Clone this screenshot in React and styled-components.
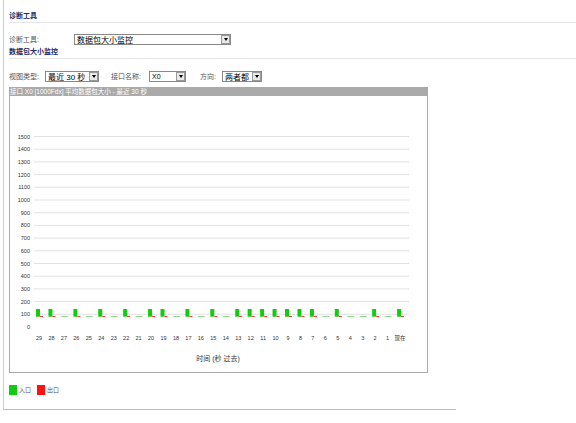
import React from 'react';
import styled, { createGlobalStyle } from 'styled-components';

const Global = createGlobalStyle`
  body { margin: 0; background: #fff; font-family: "Liberation Sans", "Noto Sans CJK SC", sans-serif; font-size: 7px; color: #333; }
`;

const Page = styled.div`
  width: 453px;
  height: 410px;
  margin-left: 3px;
  border-left: 1px solid #ccc;
  border-bottom: 1px solid #bbb;
  padding-left: 5px;
  box-sizing: border-box;
`;

const Section = styled.div`
  font-weight: bold;
  color: #1a2a6a;
  font-size: 7px;
  line-height: 8px;
  padding: ${p => p.$top}px 0 2px 0;
  border-bottom: 1px solid #e4e4e4;
  margin-right: -120px;
`;

const Row = styled.div`
  display: flex;
  align-items: center;
  height: 12px;
  margin-top: ${p => p.$top}px;
  color: #555;
  white-space: nowrap;
`;

const Label = styled.span`
  width: ${p => p.$w}px;
  margin-left: ${p => p.$ml || 0}px;
`;

const Select = styled.div`
  width: ${p => p.$w}px;
  height: 11px;
  border: 1px solid #888;
  display: flex;
  align-items: center;
  justify-content: space-between;
  font-size: ${p => p.$fs || 8}px;
  color: #000;
  padding-left: 2px;
  box-sizing: border-box;
  background: #fff;
  white-space: nowrap;
`;

const Arrow = styled.span`
  width: 9px;
  height: 9px;
  border: 1px solid #999;
  background: #e8e8e8;
  box-sizing: border-box;
  flex-shrink: 0;
  display: flex;
  align-items: center;
  justify-content: center;
  &::after { content: ''; border-left: 2px solid transparent; border-right: 2px solid transparent; border-top: 3px solid #000; }
`;

const Panel = styled.div`
  width: 419px;
  margin-top: 5px;
  border: 1px solid #aaa;
  border-top: none;
  box-sizing: border-box;
`;

const PanelTitle = styled.div`
  background: #aaa;
  color: #fff;
  height: 9px;
  line-height: 9px;
  font-size: 6.5px;
  padding-left: 1px;
  margin: 0 -1px;
  white-space: nowrap;
`;

const Legend = styled.div`
  display: flex;
  align-items: center;
  gap: 6px;
  margin-top: 12px;
  font-size: 6px;
  color: #555;
`;

const Swatch = styled.span`
  width: 8px;
  height: 10px;
  background: ${p => p.$c};
  display: inline-block;
  vertical-align: middle;
  margin-right: 2px;
`;

const green = [1,1,0,1,0,1,0,1,0,1,1,0,1,0,1,0,1,1,1,1,1,1,1,0,1,0,0,1,0,1];
const labels = [...Array(29)].map((_, i) => String(29 - i)).concat('现在');

const Chart = () => {
  const y0 = 231, step = 12.7, x0 = 26, colW = 12.45;
  return (
    <svg width="417" height="276" style={{ display: 'block' }}>
      {[...Array(16)].map((_, i) => (
        <g key={i}>
          <text x="20" y={y0 - i * step + 2} fontSize="5.5" textAnchor="end" fill="#333">{i * 100}</text>
          {i > 0 && <line x1="24" x2="399" y1={y0 - i * step} y2={y0 - i * step} stroke="#e2e2e2" strokeWidth="1" />}
        </g>
      ))}
      {labels.map((l, i) => {
        const x = x0 + i * colW;
        return (
          <g key={i}>
            {green[i] ? <rect x={x} y={y0 - 18} width="4" height="7.7" fill="#11cc11" /> : null}
            <rect x={x + (green[i] ? 4 : 0)} y={y0 - 11} width={green[i] ? 3 : 7} height="1" fill={green[i] ? '#ff3333' : '#8fd98f'} />
            <text x={x + 3} y={y0 + 13} fontSize="5.5" textAnchor="middle" fill="#333">{l}</text>
          </g>
        );
      })}
      <text x="208" y={y0 + 34} fontSize="7" textAnchor="middle" fill="#333">时间 (秒 过去)</text>
    </svg>
  );
};

export default function App() {
  return (
    <>
      <Global />
      <Page>
        <Section $top={12}>诊断工具</Section>
        <Row $top={10}>
          <Label $w={65}>诊断工具:</Label>
          <Select $w={157}>数据包大小监控<Arrow /></Select>
        </Row>
        <Section $top={3}>数据包大小监控</Section>
        <Row $top={11}>
          <Label $w={36}>视图类型:</Label>
          <Select $w={54}>最近 30 秒<Arrow /></Select>
          <Label $w={38} $ml={12}>接口名称:</Label>
          <Select $w={37} $fs={7}>X0<Arrow /></Select>
          <Label $w={22} $ml={14}>方向:</Label>
          <Select $w={40}>两者都<Arrow /></Select>
        </Row>
        <Panel>
          <PanelTitle>接口 X0 [1000Fdx] 平均数据包大小 - 最近 30 秒</PanelTitle>
          <Chart />
        </Panel>
        <Legend>
          <span><Swatch $c="#11cc11" />入口</span>
          <span><Swatch $c="#ff1111" />出口</span>
        </Legend>
      </Page>
    </>
  );
}
